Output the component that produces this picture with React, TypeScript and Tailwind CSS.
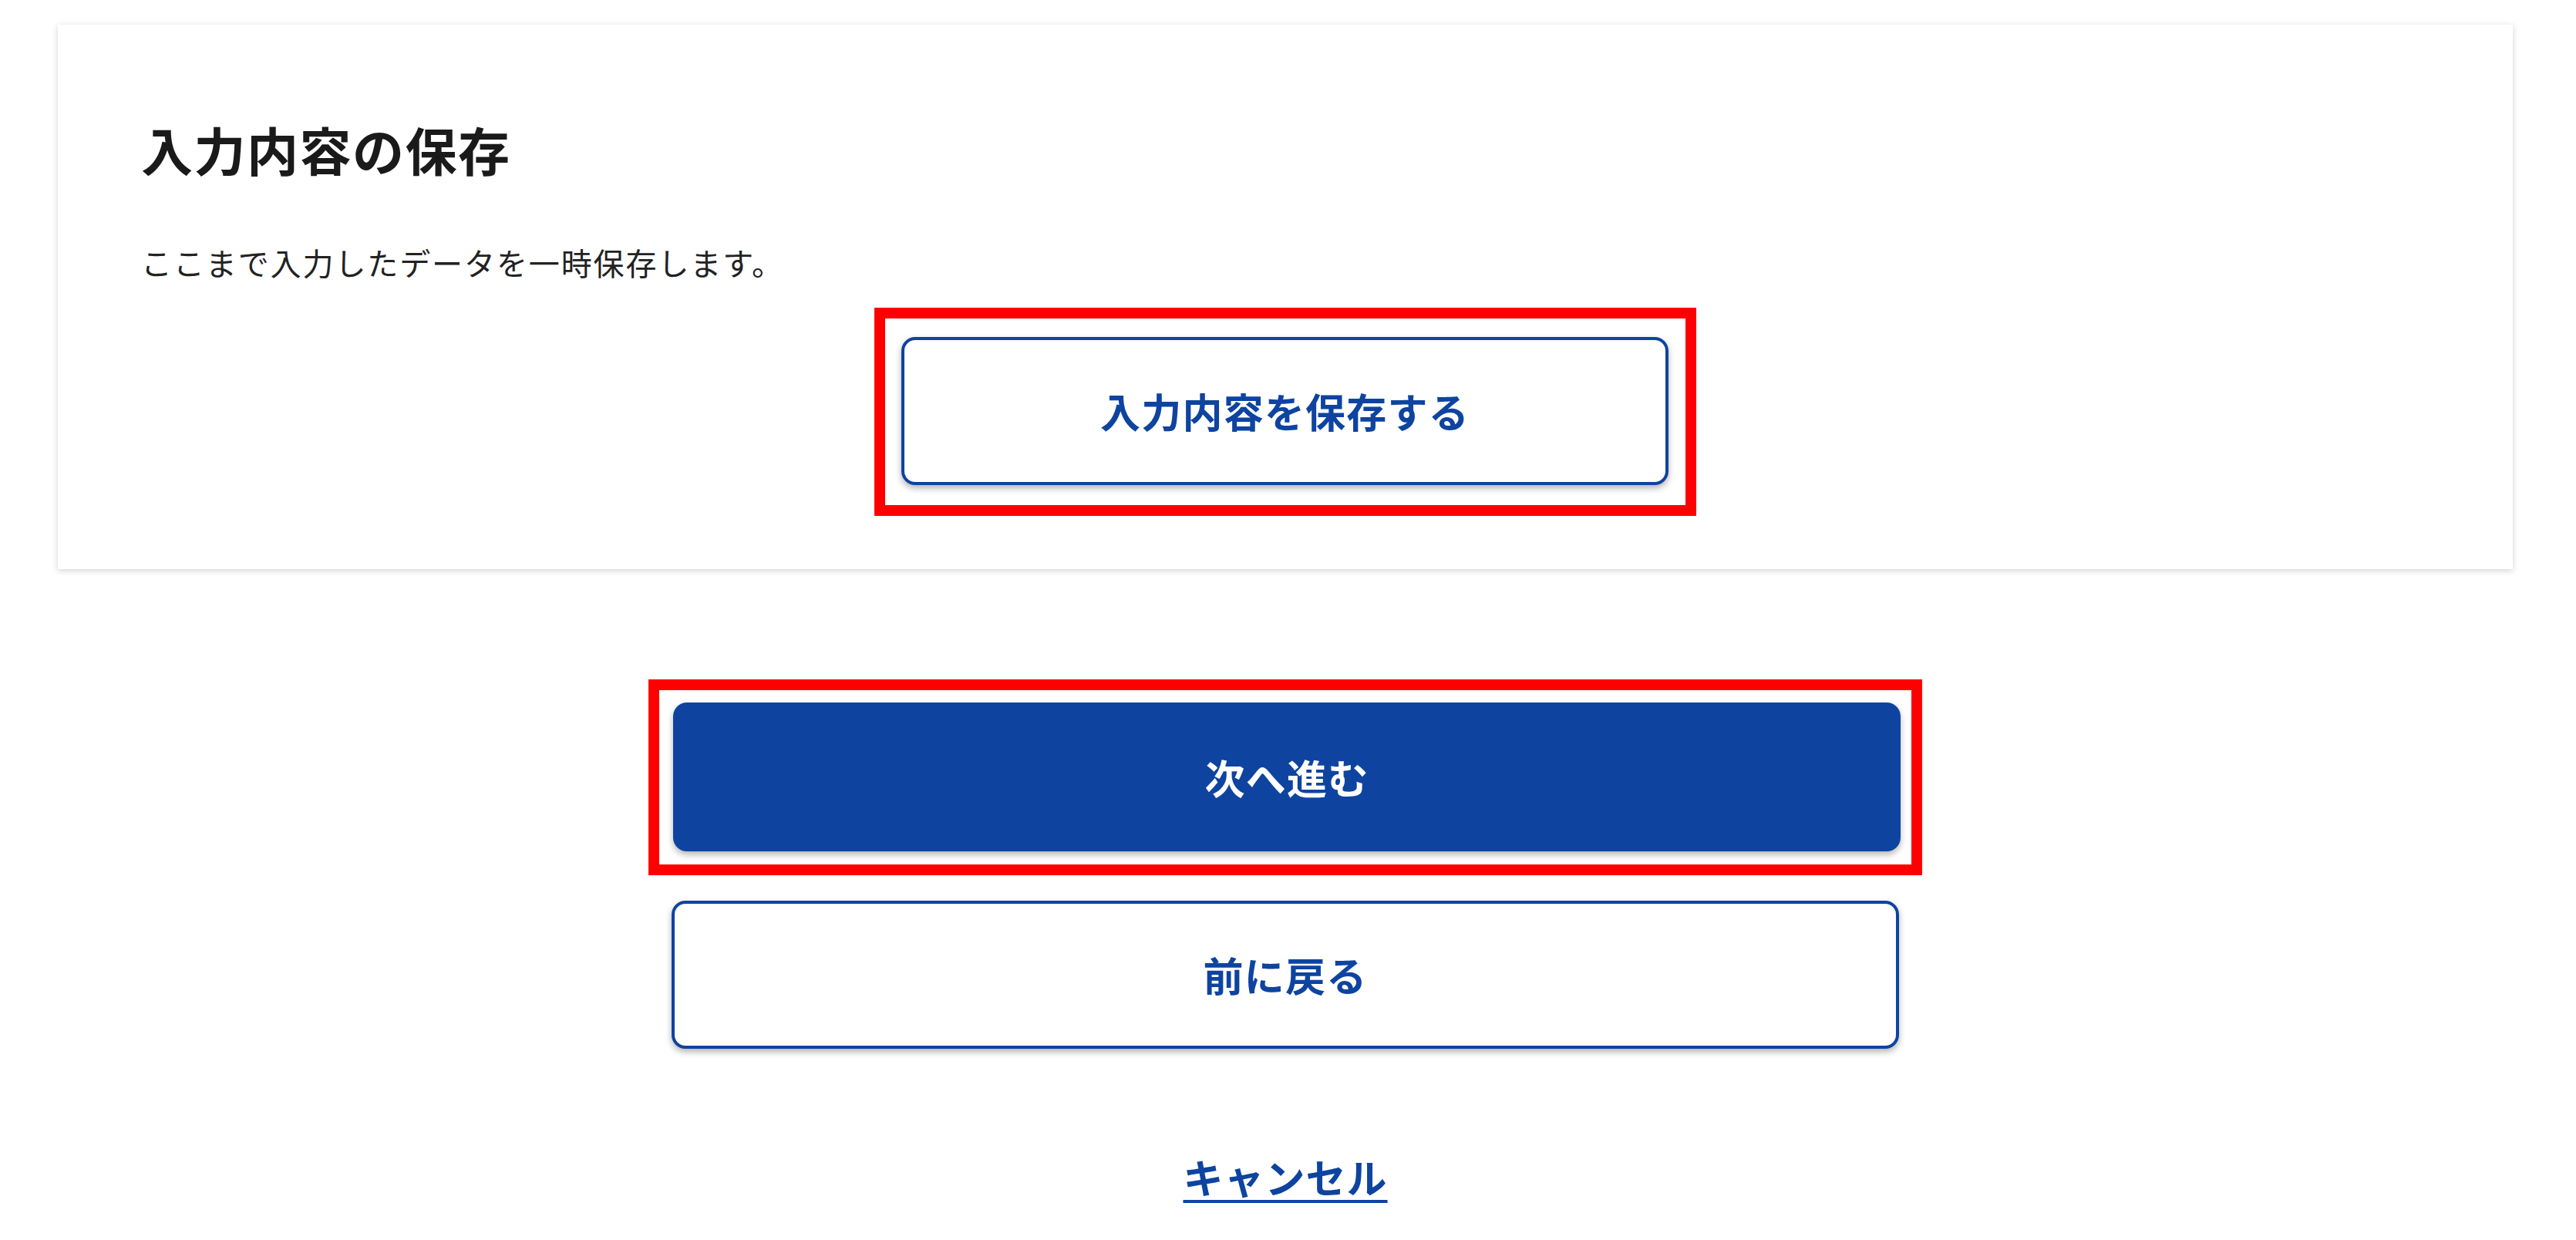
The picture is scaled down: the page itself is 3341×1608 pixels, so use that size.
export default function App() {
  return (
    <div className="min-h-screen bg-white pl-[75px] pr-[82px] pt-[32px] font-['Noto_Sans_CJK_JP','Noto_Sans_CJK_SC',sans-serif]">
      <section className="bg-white px-[108px] pt-[111px] pb-[69px] shadow-[0_2px_8px_rgba(0,0,0,0.18)]">
        <h2 className="text-[67px] leading-[100px] font-bold tracking-[1.5px] text-[#1a1a1a]">入力内容の保存</h2>
        <p className="mt-[63px] text-[40px] leading-[68px] tracking-[1.9px] text-[#222222]">
          ここまで入力したデータを一時保存します。
        </p>
        <div className="mt-[25px] flex justify-center">
          <div className="border-[14px] border-[#ff0000] pt-[24px] pb-[26px] pl-[21px] pr-[22px]">
            <button className="flex h-[192px] w-[995px] items-center justify-center rounded-[18px] border-[4px] border-[#0e44a0] bg-white text-[52px] leading-none font-bold tracking-[1.2px] text-[#0e44a0] shadow-[0_4px_8px_rgba(0,0,0,0.3)]">
              入力内容を保存する
            </button>
          </div>
        </div>
      </section>

      <div className="mt-[143px] flex flex-col items-center">
        <div className="border-[14px] border-[#ff0000] pt-[16px] pb-[17px] pl-[18px] pr-[14px]">
          <button className="flex h-[193px] w-[1592px] items-center justify-center rounded-[18px] bg-[#0e44a0] text-[52px] leading-none font-bold tracking-[1.2px] text-white shadow-[0_4px_8px_rgba(0,0,0,0.3)]">
            次へ進む
          </button>
        </div>
        <button className="mt-[33px] flex h-[192px] w-[1592px] items-center justify-center rounded-[18px] border-[4px] border-[#0e44a0] bg-white text-[52px] leading-none font-bold tracking-[1.2px] text-[#0e44a0] shadow-[0_4px_8px_rgba(0,0,0,0.3)]">
          前に戻る
        </button>
        <a
          href="#"
          className="mt-[127px] text-[52px] leading-[78px] font-bold tracking-[1px] text-[#0e44a0] underline decoration-[4px] underline-offset-[8px]"
        >
          キャンセル
        </a>
      </div>
    </div>
  );
}
